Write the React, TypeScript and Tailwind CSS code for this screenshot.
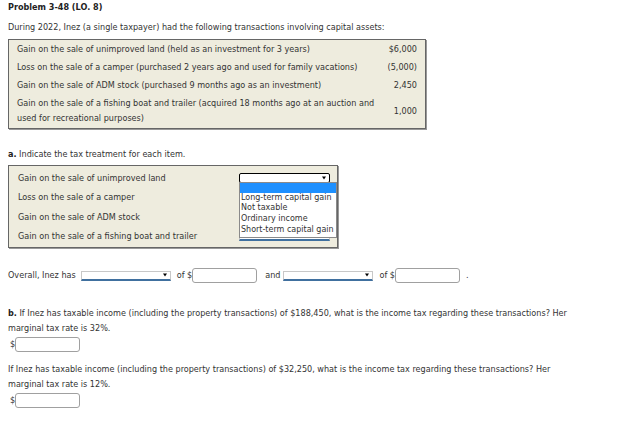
const transactions = [
  { label: "Gain on the sale of unimproved land (held as an investment for 3 years)", value: "$6,000" },
  { label: "Loss on the sale of a camper (purchased 2 years ago and used for family vacations)", value: "(5,000)" },
  { label: "Gain on the sale of ADM stock (purchased 9 months ago as an investment)", value: "2,450" },
  {
    label:
      "Gain on the sale of a fishing boat and trailer (acquired 18 months ago at an auction and used for recreational purposes)",
    value: "1,000",
  },
];

const treatments = [
  "Gain on the sale of unimproved land",
  "Loss on the sale of a camper",
  "Gain on the sale of ADM stock",
  "Gain on the sale of a fishing boat and trailer",
];

const options = ["Long-term capital gain", "Not taxable", "Ordinary income", "Short-term capital gain"];

function Arrow() {
  return (
    <span className="absolute right-[3px] top-1/2 -translate-y-1/2 border-x-[2.5px] border-t-[3px] border-x-transparent border-t-black" />
  );
}

function Select({ width = "w-[90px]" }: { width?: string }) {
  return (
    <div className={`relative h-[10px] ${width} border border-b-2 border-[#c8c8c8] border-b-[#40709f] bg-white`}>
      <Arrow />
    </div>
  );
}

function OpenSelect() {
  return (
    <div className="relative h-[10px] w-[91px] rounded-[2px] border border-black bg-white">
      <Arrow />
      <div className="absolute left-[-1px] top-[8px] z-10 w-[98px] border border-[#8a8a8a] bg-white pb-[1px] text-[8px] leading-[10.7px] text-[#333]">
        <div className="h-[10px] bg-[#1e90ff]" />
        {options.map((o) => (
          <div key={o} className="whitespace-nowrap pl-[1px]">
            {o}
          </div>
        ))}
      </div>
    </div>
  );
}

function Input() {
  return <div className="h-[15px] w-[65px] rounded-[3px] border border-[#a0a0a0] bg-white" />;
}

export default function App() {
  return (
    <div className="h-[443px] w-[624px] bg-white px-2 font-['DejaVu_Sans',sans-serif] text-[8.1px] text-[#333]">
      <h1 className="font-bold leading-[14px] text-[#222]">Problem 3-48 (LO. 8)</h1>
      <p className="mt-[6px] leading-[14px]">
        During 2022, Inez (a single taxpayer) had the following transactions involving capital assets:
      </p>

      <div className="mt-[5px] w-[418px] border border-[#666] bg-[#eeecde] px-2 pb-[2px] pt-[2px] shadow-[1px_1px_0_#999]">
        <div className="flex flex-col gap-[3px] leading-[15px]">
          {transactions.map((t) => (
            <div key={t.value} className="flex items-center justify-between">
              <span className="w-[365px]">{t.label}</span>
              <span>{t.value}</span>
            </div>
          ))}
        </div>
      </div>

      <p className="mt-[18px] leading-[14px]">
        <b className="text-[#222]">a.</b> Indicate the tax treatment for each item.
      </p>

      <div className="mt-[4px] w-[330px] border border-[#666] bg-[#eeecde] pb-[1px] pl-[9px] pt-[2px] shadow-[1px_1px_0_#999]">
        {treatments.map((t, i) => (
          <div key={t} className="flex h-[19.5px] items-center">
            <span className="w-[221px]">{t}</span>
            {i === 0 ? <OpenSelect /> : <Select width="w-[91px]" />}
          </div>
        ))}
      </div>

      <div className="mt-[20px] flex h-[15px] items-center">
        <span>Overall, Inez has</span>
        <div className="ml-[5px]">
          <Select />
        </div>
        <span className="ml-[6px]">of $</span>
        <Input />
        <span className="ml-[8px]">and</span>
        <div className="ml-[3px]">
          <Select />
        </div>
        <span className="ml-[6px]">of $</span>
        <Input />
        <span className="ml-[6px]">.</span>
      </div>

      <p className="mt-[23px] w-[576px] leading-[15px]">
        <b className="text-[#222]">b.</b> If Inez has taxable income (including the property transactions) of
        $188,450, what is the income tax regarding these transactions? Her marginal tax rate is 32%.
      </p>
      <div className="mt-[1px] flex items-center pl-[2px]">
        <span>$</span>
        <Input />
      </div>

      <p className="mt-[9.5px] w-[576px] leading-[15px]">
        If Inez has taxable income (including the property transactions) of $32,250, what is the income tax
        regarding these transactions? Her marginal tax rate is 12%.
      </p>
      <div className="mt-[1px] flex items-center pl-[2px]">
        <span>$</span>
        <Input />
      </div>
    </div>
  );
}
